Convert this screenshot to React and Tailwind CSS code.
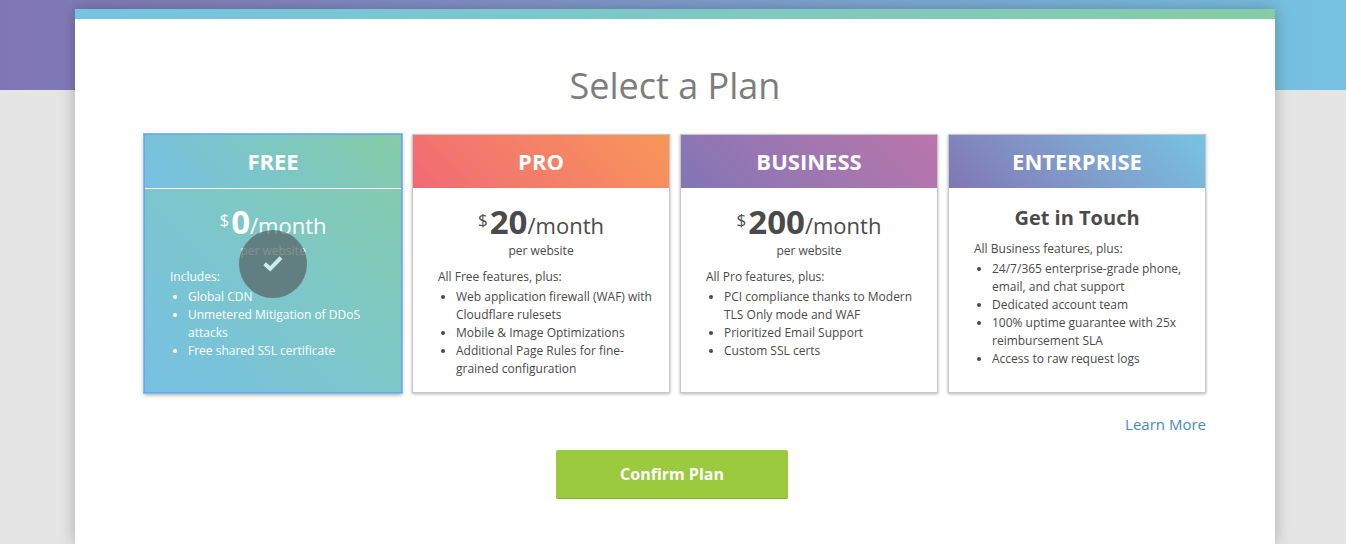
import { useState } from "react";

const plans = [
  {
    id: "free",
    name: "FREE",
    price: "0",
    intro: "Includes:",
    features: [
      "Global CDN",
      "Unmetered Mitigation of DDoS attacks",
      "Free shared SSL certificate",
    ],
    header: "bg-linear-45 from-[#76c0e4] via-[#7dc7c4] to-[#86cca6]",
  },
  {
    id: "pro",
    name: "PRO",
    price: "20",
    intro: "All Free features, plus:",
    features: [
      "Web application firewall (WAF) with Cloudflare rulesets",
      "Mobile & Image Optimizations",
      "Additional Page Rules for fine-grained configuration",
    ],
    header: "bg-linear-45 from-[#f16975] to-[#f79657]",
  },
  {
    id: "business",
    name: "BUSINESS",
    price: "200",
    intro: "All Pro features, plus:",
    features: [
      "PCI compliance thanks to Modern TLS Only mode and WAF",
      "Prioritized Email Support",
      "Custom SSL certs",
    ],
    header: "bg-linear-45 from-[#8176b5] to-[#bb75ab]",
  },
  {
    id: "enterprise",
    name: "ENTERPRISE",
    intro: "All Business features, plus:",
    features: [
      "24/7/365 enterprise-grade phone, email, and chat support",
      "Dedicated account team",
      "100% uptime guarantee with 25x reimbursement SLA",
      "Access to raw request logs",
    ],
    header: "bg-linear-45 from-[#8176b5] to-[#76c4e2]",
  },
];

function Check() {
  return (
    <span className="absolute inset-0 flex items-center justify-center">
      <span className="flex size-17 items-center justify-center rounded-full bg-[#556062]/70">
        <svg viewBox="0 0 20 16" className="h-4 w-5" fill="none" stroke="#c9efec" strokeWidth="4" aria-hidden="true">
          <path d="M1.6 7.8 7.2 12.8 18 1.6" />
        </svg>
      </span>
    </span>
  );
}

function PlanCard({ plan, selected, onSelect }) {
  return (
    <label
      className={`relative flex cursor-pointer flex-col border ${
        selected
          ? "border-[#66a8e8] bg-linear-45 from-[#76c0e4] via-[#7dc7c8] to-[#86cca6] text-white shadow-[0_0_0_1px_#8ab8f0,0_2px_4px_rgba(0,0,0,0.35)]"
          : "border-[#c8c8c8] bg-white text-[#4a4a4a] shadow-[0_1px_3px_rgba(0,0,0,0.3)]"
      }`}
    >
      <input
        type="radio"
        name="plan"
        value={plan.id}
        checked={selected}
        onChange={onSelect}
        className="sr-only"
      />
      <span
        className={`flex h-[54px] items-center justify-center border-b border-white pb-0.5 text-[22px] leading-7 font-bold text-white ${plan.header}`}
      >
        {plan.name}
      </span>
      <span className="flex flex-1 flex-col pt-[15px] pr-4 pb-3 pl-[25px] text-xs leading-[18px]">
        {plan.price ? (
          <>
            <span className="mr-[9px] flex h-[38px] items-baseline justify-center text-[22px] leading-9">
              <span className="mr-0.5 self-start text-[17px] leading-8">$</span>
              <span className="text-[33px] leading-9 font-bold">{plan.price}</span>
              /month
            </span>
            <span className="mr-[9px] text-center">per website</span>
          </>
        ) : (
          <span className="mr-[9px] text-center text-xl leading-7 font-bold">Get in Touch</span>
        )}
        <span className="mt-2">{plan.intro}</span>
        <ul className="mt-0.5 list-disc pl-[18px]">
          {plan.features.map((feature) => (
            <li key={feature}>{feature}</li>
          ))}
        </ul>
      </span>
      {selected && <Check />}
    </label>
  );
}

export default function App() {
  const [selected, setSelected] = useState("free");

  return (
    <div className="grid min-h-screen bg-[#e5e5e5] font-['Open_Sans',sans-serif]">
      <div className="col-start-1 row-start-1 h-[90px] bg-linear-to-r from-[#8176b5] to-[#76c2e2]" />
      <div className="col-start-1 row-start-1 flex justify-center pt-[9px] pl-1">
        <main className="z-10 flex w-full max-w-[1200px] flex-col bg-white shadow-[0_0_15px_rgba(0,0,0,0.25)]">
          <div className="h-[10px] bg-linear-to-r from-[#76c4e2] to-[#86cca6]" />
          <form className="flex flex-col px-[69px] pt-[42px] pb-11" onSubmit={(e) => e.preventDefault()}>
            <h1 className="text-center text-4xl leading-[50px] text-[#7d7d7d]">Select a Plan</h1>
            <div role="radiogroup" aria-label="Plan" className="mt-[23px] grid min-h-[259px] grid-cols-4 gap-[10px]">
              {plans.map((plan) => (
                <PlanCard
                  key={plan.id}
                  plan={plan}
                  selected={selected === plan.id}
                  onSelect={() => setSelected(plan.id)}
                />
              ))}
            </div>
            <a href="#plans" className="mt-5 self-end text-[15px] leading-[22px] text-[#4a8ac0]">
              Learn More
            </a>
            <button
              type="submit"
              className="mt-[15px] mr-[6px] h-[49px] w-[232px] self-center rounded-xs border-b border-[#86b135] bg-[#9bca3e] text-base font-bold text-white"
            >
              Confirm Plan
            </button>
          </form>
        </main>
      </div>
    </div>
  );
}
